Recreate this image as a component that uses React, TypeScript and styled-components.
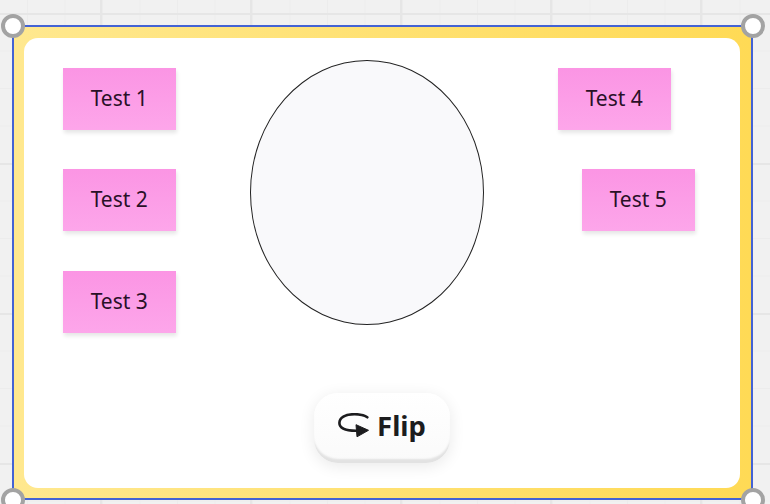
import React from 'react';
import styled, { createGlobalStyle } from 'styled-components';

const GlobalStyle = createGlobalStyle`
  html, body {
    margin: 0;
    padding: 0;
    height: 100%;
    overflow: hidden;
  }
  body {
    font-family: "Noto Sans", "Open Sans", sans-serif;
  }
`;

const Board = styled.div`
  width: 770px;
  height: 504px;
  box-sizing: border-box;
  padding: 26px 18px 0 13px;
  overflow: hidden;
  background-color: #f1f1f1;
  background-image:
    linear-gradient(to right, #e6e6e6 2px, transparent 2px),
    linear-gradient(to bottom, #e6e6e6 2px, transparent 2px),
    linear-gradient(to right, #ececec 1px, transparent 1px),
    linear-gradient(to bottom, #ececec 1px, transparent 1px);
  background-size: 150px 150px, 150px 150px, 37.5px 37.5px, 37.5px 37.5px;
  background-position: 100px 13px, 100px 13px, 27px 13px, 27px 13px;
`;

const Frame = styled.div`
  position: relative;
  width: 739px;
  height: 473px;
  box-sizing: border-box;
  padding: 12px 12px 11px 11px;
  background: linear-gradient(to right, #ffe88f, #ffda55);
  border-radius: 10px;
`;

const Selection = styled.div`
  position: absolute;
  inset: -1px;
  border: 2px solid #4463d4;
  pointer-events: none;
`;

const Handle = styled.span<{ $x: 'left' | 'right'; $y: 'top' | 'bottom' }>`
  position: absolute;
  width: 24px;
  height: 24px;
  box-sizing: border-box;
  border: 4px solid #a3a3a3;
  border-radius: 50%;
  background: #ffffff;
  ${p => p.$x}: -12.5px;
  ${p => p.$y}: -12.5px;
`;

const Canvas = styled.div`
  position: relative;
  height: 100%;
  box-sizing: border-box;
  padding-bottom: 25px;
  display: flex;
  flex-direction: column;
  justify-content: flex-end;
  align-items: center;
  background: #ffffff;
  border-radius: 14px;
`;

const Sticky = styled.div<{ $left: number; $top: number }>`
  position: absolute;
  left: ${p => p.$left}px;
  top: ${p => p.$top}px;
  width: 112.5px;
  height: 62px;
  padding-bottom: 2px;
  display: flex;
  align-items: center;
  justify-content: center;
  box-sizing: border-box;
  background: linear-gradient(to bottom, #fb95e4, #fda6ea);
  box-shadow: 1px 3px 4px rgba(0, 0, 0, 0.1);
  color: #2a1027;
  font-size: 21px;
`;

const Ellipse = styled.div`
  position: absolute;
  left: 226px;
  top: 22px;
  width: 234px;
  height: 265px;
  box-sizing: border-box;
  border: 1px solid #222222;
  border-radius: 50%;
  background: #f9f9fb;
`;

const FlipButton = styled.button`
  width: 136px;
  height: 70px;
  box-sizing: border-box;
  padding: 0 0 6px;
  display: flex;
  align-items: center;
  justify-content: center;
  gap: 7px;
  border: none;
  border-radius: 24px;
  background: linear-gradient(to bottom, #ffffff, #fafafa);
  box-shadow: inset 0 -5px 2px -1px #e2e2e2, 0 3px 16px rgba(0, 0, 0, 0.09);
  color: #1c1c1e;
  font-family: "Noto Sans", "Open Sans", sans-serif;
  font-size: 27.5px;
  font-weight: 700;
`;

const notes = [
  { label: 'Test 1', left: 39, top: 30 },
  { label: 'Test 2', left: 39, top: 131 },
  { label: 'Test 3', left: 39, top: 233 },
  { label: 'Test 4', left: 534, top: 30 },
  { label: 'Test 5', left: 558, top: 131 },
];

const FlipIcon = () => (
  <svg width="32" height="25" viewBox="0 0 32 25" fill="none">
    <path
      d="M29.3 4.3 C26 2 21 1.2 16.5 1.2 C7 1.2 1.4 5 1.4 10 C1.4 15 7 17.6 18 17.8"
      stroke="#1c1c1e"
      strokeWidth="2.6"
      strokeLinecap="round"
    />
    <path d="M18 11.7 L30.5 17.3 L19 23.8 Z" fill="#1c1c1e" stroke="#1c1c1e" strokeWidth="1" strokeLinejoin="round" />
  </svg>
);

export default function App() {
  return (
    <>
      <GlobalStyle />
      <Board>
        <Frame>
          <Canvas>
            {notes.map(n => (
              <Sticky key={n.label} $left={n.left} $top={n.top}>
                {n.label}
              </Sticky>
            ))}
            <Ellipse />
            <FlipButton>
              <FlipIcon />
              Flip
            </FlipButton>
          </Canvas>
          <Selection />
          <Handle $x="left" $y="top" />
          <Handle $x="right" $y="top" />
          <Handle $x="left" $y="bottom" />
          <Handle $x="right" $y="bottom" />
        </Frame>
      </Board>
    </>
  );
}
